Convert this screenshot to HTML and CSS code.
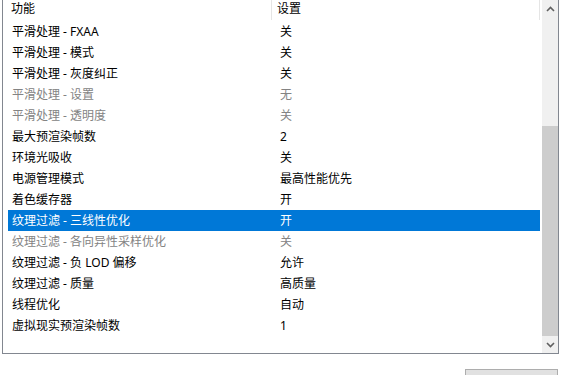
FILE: index.html
```html
<!DOCTYPE html>
<html lang="zh-CN">
<head>
    <meta charset="UTF-8">
    <title>3D 设置</title>
    <link rel="stylesheet" href="styles.css">
</head>
<body>
    <div class="settings-list">
        <div class="list-view">
            <div class="list-header">
                <div class="col-name">功能</div>
                <div class="col-value">设置</div>
            </div>
            <div class="row"><div class="col-name">平滑处理 - FXAA</div><div class="col-value">关</div></div>
            <div class="row"><div class="col-name">平滑处理 - 模式</div><div class="col-value">关</div></div>
            <div class="row"><div class="col-name">平滑处理 - 灰度纠正</div><div class="col-value">关</div></div>
            <div class="row disabled"><div class="col-name">平滑处理 - 设置</div><div class="col-value">无</div></div>
            <div class="row disabled"><div class="col-name">平滑处理 - 透明度</div><div class="col-value">关</div></div>
            <div class="row"><div class="col-name">最大预渲染帧数</div><div class="col-value">2</div></div>
            <div class="row"><div class="col-name">环境光吸收</div><div class="col-value">关</div></div>
            <div class="row"><div class="col-name">电源管理模式</div><div class="col-value">最高性能优先</div></div>
            <div class="row"><div class="col-name">着色缓存器</div><div class="col-value">开</div></div>
            <div class="row selected"><div class="col-name">纹理过滤 - 三线性优化</div><div class="col-value">开</div></div>
            <div class="row disabled"><div class="col-name">纹理过滤 - 各向异性采样优化</div><div class="col-value">关</div></div>
            <div class="row"><div class="col-name">纹理过滤 - 负 LOD 偏移</div><div class="col-value">允许</div></div>
            <div class="row"><div class="col-name">纹理过滤 - 质量</div><div class="col-value">高质量</div></div>
            <div class="row"><div class="col-name">线程优化</div><div class="col-value">自动</div></div>
            <div class="row"><div class="col-name">虚拟现实预渲染帧数</div><div class="col-value">1</div></div>
        </div>
        <div class="scrollbar">
            <div class="scroll-btn">
                <svg width="9" height="6" viewBox="0 0 9 6"><path d="M1 5 L4.5 1.5 L8 5" fill="none" stroke="#606060" stroke-width="1.6"/></svg>
            </div>
            <div class="scroll-track">
                <div class="scroll-thumb"></div>
            </div>
            <div class="scroll-btn">
                <svg width="9" height="6" viewBox="0 0 9 6"><path d="M1 1 L4.5 4.5 L8 1" fill="none" stroke="#606060" stroke-width="1.6"/></svg>
            </div>
        </div>
    </div>

    <div class="footer">
        <button class="win-button" aria-label="恢复"></button>
    </div>
</body>
</html>
```

FILE: styles.css
```css
body {
    margin: 0;
    background: #ffffff;
    font-family: "Microsoft YaHei", "Noto Sans", "Noto Sans CJK SC", sans-serif;
    font-size: 12px;
    color: #000000;
}
.settings-list {
    display: flex;
    margin-left: 2px;
    width: 555px;
    height: 353px;
    border: 1px solid #828790;
    border-top: none;
}
.list-view {
    flex: 1;
    padding-left: 5px;
    padding-right: 2px;
}
.list-header {
    display: flex;
    height: 21px;
    line-height: 17px;
}
.list-header .col-name {
    padding-left: 3px;
    border-right: 1px solid #e5e5e5;
    height: 20px;
}
.list-header .col-value {
    padding-left: 5px;
    border-right: 1px solid #e5e5e5;
    height: 20px;
}
.row {
    display: flex;
    height: 21px;
    line-height: 21px;
}
.col-name {
    width: 260px;
    padding-left: 4px;
    white-space: nowrap;
}
.col-value {
    flex: 1;
    padding-left: 8px;
    white-space: nowrap;
}
.row.disabled { color: #838383; }
.row.selected {
    background: #0078d7;
    color: #ffffff;
}
.scrollbar {
    width: 16px;
    display: flex;
    flex-direction: column;
    background: #f0f0f0;
}
.scroll-btn {
    height: 17px;
    display: flex;
    align-items: center;
    justify-content: center;
}
.scroll-track {
    flex: 1;
    display: flex;
    flex-direction: column;
    padding-top: 109px;
}
.scroll-thumb {
    flex: 1;
    background: #cdcdcd;
}
.footer {
    display: flex;
    justify-content: flex-end;
    padding: 15px 7px 0 0;
}
.win-button {
    width: 93px;
    height: 24px;
    background: #e1e1e1;
    border: 1px solid #adadad;
}
```
